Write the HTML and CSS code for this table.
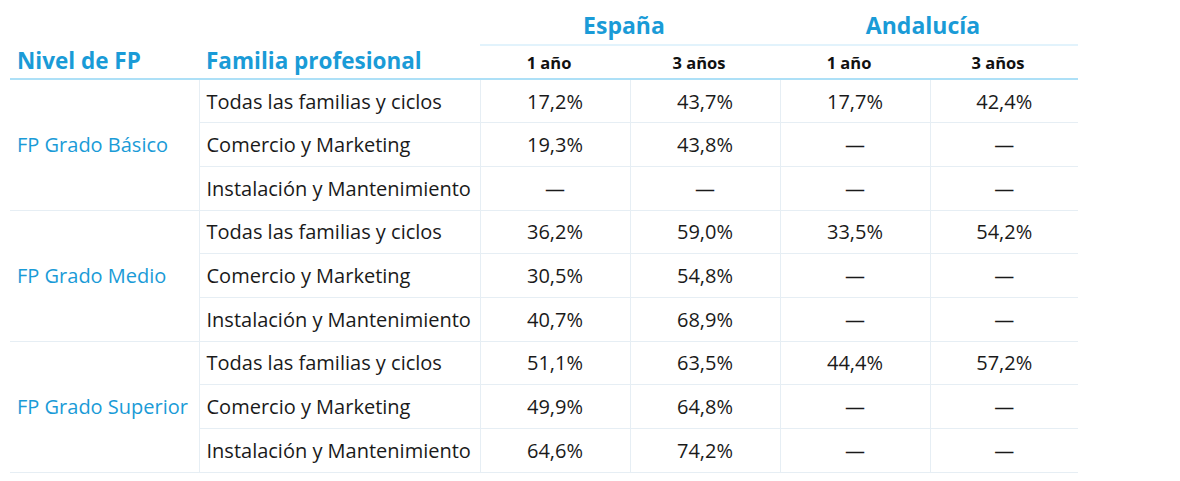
FILE: index.html
```html
<!DOCTYPE html>
<html lang="es">
<head>
<meta charset="utf-8">
<title>Tasa de inserción FP</title>
<link rel="stylesheet" href="styles.css">
</head>
<body>
<table class="fp">
  <colgroup>
    <col class="c-nivel"><col class="c-fam"><col class="c-val"><col class="c-val"><col class="c-val"><col class="c-last">
  </colgroup>
  <thead>
    <tr class="h1">
      <th class="main" rowspan="2">Nivel de FP</th>
      <th class="main" rowspan="2">Familia profesional</th>
      <th class="region" colspan="2">España</th>
      <th class="region" colspan="2">Andalucía</th>
    </tr>
    <tr class="h2">
      <th class="sub">1 año</th>
      <th class="sub">3 años</th>
      <th class="sub">1 año</th>
      <th class="sub">3 años</th>
    </tr>
  </thead>
  <tbody>
    <tr class="grp">
      <td class="nivel" rowspan="3">FP Grado Básico</td>
      <td class="fam">Todas las familias y ciclos</td>
      <td class="v">17,2%</td><td class="v">43,7%</td><td class="v">17,7%</td><td class="v">42,4%</td>
    </tr>
    <tr>
      <td class="fam">Comercio y Marketing</td>
      <td class="v">19,3%</td><td class="v">43,8%</td><td class="v">—</td><td class="v">—</td>
    </tr>
    <tr>
      <td class="fam">Instalación y Mantenimiento</td>
      <td class="v">—</td><td class="v">—</td><td class="v">—</td><td class="v">—</td>
    </tr>
    <tr class="grp">
      <td class="nivel" rowspan="3">FP Grado Medio</td>
      <td class="fam">Todas las familias y ciclos</td>
      <td class="v">36,2%</td><td class="v">59,0%</td><td class="v">33,5%</td><td class="v">54,2%</td>
    </tr>
    <tr>
      <td class="fam">Comercio y Marketing</td>
      <td class="v">30,5%</td><td class="v">54,8%</td><td class="v">—</td><td class="v">—</td>
    </tr>
    <tr>
      <td class="fam">Instalación y Mantenimiento</td>
      <td class="v">40,7%</td><td class="v">68,9%</td><td class="v">—</td><td class="v">—</td>
    </tr>
    <tr class="grp">
      <td class="nivel" rowspan="3">FP Grado Superior</td>
      <td class="fam">Todas las familias y ciclos</td>
      <td class="v">51,1%</td><td class="v">63,5%</td><td class="v">44,4%</td><td class="v">57,2%</td>
    </tr>
    <tr>
      <td class="fam">Comercio y Marketing</td>
      <td class="v">49,9%</td><td class="v">64,8%</td><td class="v">—</td><td class="v">—</td>
    </tr>
    <tr>
      <td class="fam">Instalación y Mantenimiento</td>
      <td class="v">64,6%</td><td class="v">74,2%</td><td class="v">—</td><td class="v">—</td>
    </tr>
  </tbody>
</table>
</body>
</html>
```
FILE: styles.css
```css
html, body {
  margin: 0;
  padding: 0;
  background: #ffffff;
}
body {
  font-family: "Open Sans", "Noto Sans", "DejaVu Sans", sans-serif;
  color: #1a1a1a;
}
.fp {
  margin-left: 10px;
  border-collapse: collapse;
  table-layout: fixed;
  width: 1068px;
}
.c-nivel { width: 189px; }
.c-fam { width: 281px; }
.c-val { width: 150px; }
.c-last { width: 148px; }

th, td {
  padding: 0;
  box-sizing: border-box;
}
.h1 { height: 45px; }
.h2 { height: 34px; }

.main {
  text-align: left;
  vertical-align: bottom;
  color: #1a9bd7;
  font-size: 22.5px;
  font-weight: 700;
  padding: 0 0 2px 7px;
  border-bottom: 2px solid #ade0f7;
}
.region {
  color: #1a9bd7;
  font-size: 23px;
  font-weight: 700;
  text-align: center;
  vertical-align: top;
  padding: 9px 12px 0 0;
  border-bottom: 2px solid #e2f3fc;
}
.sub {
  font-size: 16.5px;
  font-weight: 700;
  color: #111;
  text-align: center;
  vertical-align: middle;
  padding: 1px 12px 0 0;
  border-bottom: 2px solid #ade0f7;
}
tbody tr { height: 43.7px; }
tbody td {
  border-bottom: 1px solid #e6eef4;
  font-size: 20px;
}
.nivel {
  color: #1a9bd7;
  padding-left: 7px;
  border-right: 1px solid #e6eef4;
}
.fam {
  padding-left: 7px;
  border-right: 1px solid #e6eef4;
}
.v {
  text-align: center;
  border-right: 1px solid #e6eef4;
}
.v:last-child { border-right: none; }
```
